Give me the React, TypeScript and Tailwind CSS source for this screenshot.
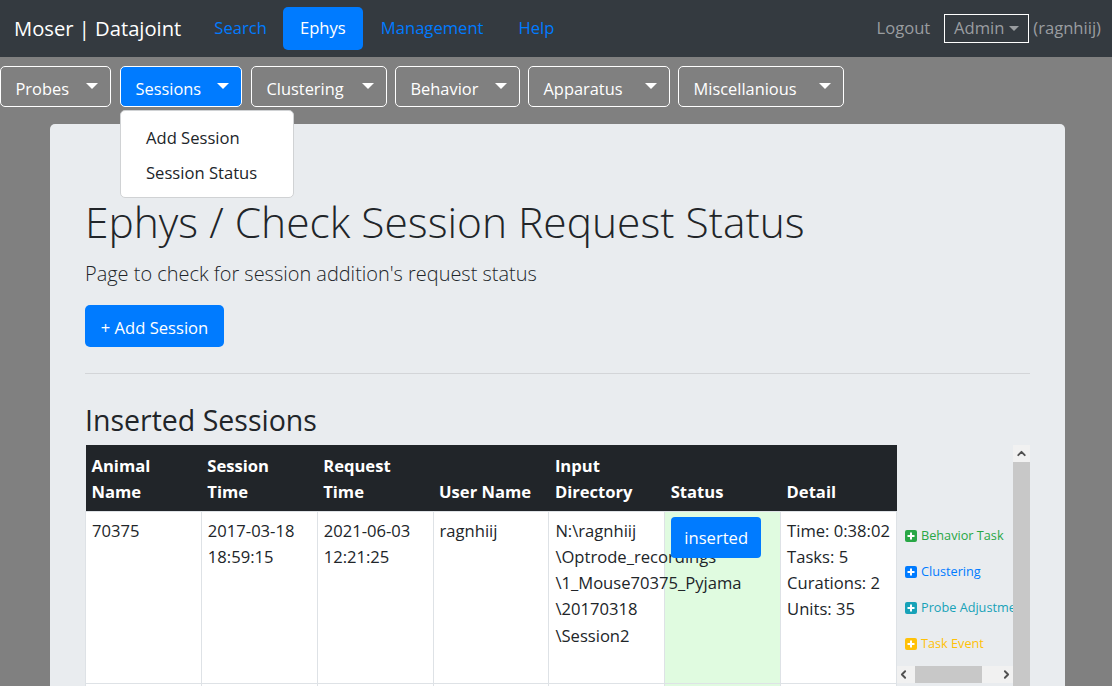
import { ChevronLeft, ChevronRight, ChevronUp } from 'lucide-react';

const subNav = [
  { label: 'Probes', width: 'w-[111px]' },
  { label: 'Sessions', width: 'ml-px w-[122px]', active: true },
  { label: 'Clustering', width: 'ml-px w-[136px]' },
  { label: 'Behavior', width: 'w-[125px]' },
  { label: 'Apparatus', width: 'w-[142px]' },
  { label: 'Miscellanious', width: 'w-[166px]' },
];

const headers = [['Animal', 'Name'], ['Session', 'Time'], ['Request', 'Time'], ['User Name'], ['Input', 'Directory'], ['Status'], ['Detail']];

const links = [
  { label: 'Behavior Task', text: 'text-[#28a745]', fill: '#28a745' },
  { label: 'Clustering', text: 'text-[#007bff]', fill: '#007bff' },
  { label: 'Probe Adjustment', text: 'text-[#17a2b8]', fill: '#17a2b8' },
  { label: 'Task Event', text: 'text-[#ffc107]', fill: '#ffc107' },
];

function PlusSquare({ fill }: { fill: string }) {
  return (
    <svg width="12" height="12" viewBox="0 0 12 12" className="shrink-0">
      <rect width="12" height="12" rx="2" fill={fill} />
      <path d="M6 2.5v7M2.5 6h7" stroke="#fff" strokeWidth="2" />
    </svg>
  );
}

export default function App() {
  return (
    <div className="h-[686px] overflow-hidden bg-[#808080] font-['Open_Sans','Noto_Sans',sans-serif] text-[16.6px] text-[#212529]">
      <nav className="flex h-[57px] items-center bg-[#343a40] pl-[14px] pr-[11px]">
        <span className="mr-[33px] text-[20.2px] text-white">Moser | Datajoint</span>
        <a className="text-[#007bff]">Search</a>
        <a className="ml-[16px] flex h-[43px] w-[80px] items-center justify-center rounded-[5px] bg-[#007bff] text-white">Ephys</a>
        <a className="ml-[18px] text-[#007bff]">Management</a>
        <a className="ml-[35px] text-[#007bff]">Help</a>
        <a className="ml-auto text-[#9a9da0]">Logout</a>
        <span className="ml-[14px] flex h-[29px] w-[85px] items-center justify-center gap-[5px] border border-white text-[#9a9da0]">
          Admin
          <span className="inline-block border-x-[5px] border-t-[5px] border-x-transparent border-t-[#9a9da0]" />
        </span>
        <span className="ml-[4px] text-[#9a9da0]">(ragnhiij)</span>
      </nav>

      <div className="relative flex h-[67px] items-start gap-[8px] pt-[9px]">
        {subNav.map((item) => (
          <button
            key={item.label}
            className={`flex h-[41px] items-start justify-between rounded-[5px] border border-white pl-[14.5px] pr-[12px] pt-[9px] text-[16.4px] text-white ${item.width} ${item.active ? 'bg-[#007bff]' : ''}`}
          >
            <span className="leading-[26px]">{item.label}</span>
            <span className="mt-[7px] inline-block border-x-[6px] border-t-[6px] border-x-transparent border-t-white" />
          </button>
        ))}
        <div className="absolute left-[119.5px] top-[53px] z-10 h-[88px] w-[174px] rounded-[5px] border border-[#d0d2d4] bg-white pl-[25.5px] pt-[9px] text-[16.6px] text-[#212529]">
          <div className="h-[35px] leading-[35px]">Add Session</div>
          <div className="h-[35px] leading-[35px]">Session Status</div>
        </div>
      </div>

      <main className="ml-[50px] mr-[47px] h-[600px] rounded-[5px] bg-[#e9ecef] px-[35px] pt-[69px]">
        <h1 className="text-[42.5px] font-[350] leading-[58px]">Ephys / Check Session Request Status</h1>
        <p className="mt-[7px] text-[19.95px] font-light leading-[32px]">Page to check for session addition's request status</p>
        <button className="mt-[15px] h-[42px] w-[139px] rounded-[5px] bg-[#007bff] pt-[4px] text-white">+ Add Session</button>
        <hr className="mt-[26px] border-[#d3d5d8]" />
        <h2 className="mt-[27px] h-[44px] text-[28.5px] leading-[38px]">Inserted Sessions</h2>

        <div className="flex items-start">
          <table className="w-[812px] shrink-0 table-fixed border-collapse">
            <thead>
              <tr className="h-[66px] bg-[#212529] text-white">
                {headers.map((lines) => (
                  <th key={lines[0]} className="px-[6px] pb-[6px] text-left align-bottom font-bold leading-[26px]">
                    {lines.map((line) => (
                      <div key={line}>{line}</div>
                    ))}
                  </th>
                ))}
              </tr>
            </thead>
            <tbody>
              <tr className="h-[172px] bg-white align-top leading-[26.25px]">
                <td className="border border-[#dee2e6] px-[6px] pt-[6px]">70375</td>
                <td className="border border-[#dee2e6] px-[6px] pt-[6px]">2017-03-18 18:59:15</td>
                <td className="border border-[#dee2e6] px-[6px] pt-[6px]">2021-06-03 12:21:25</td>
                <td className="border border-[#dee2e6] px-[6px] pt-[6px]">ragnhiij</td>
                <td className="border border-[#dee2e6] px-[6px] pt-[6px]">
                  <div className="whitespace-nowrap">N:\ragnhiij</div>
                  <div className="whitespace-nowrap">\Optrode_recordings</div>
                  <div className="whitespace-nowrap">\1_Mouse70375_Pyjama</div>
                  <div className="whitespace-nowrap">\20170318</div>
                  <div className="whitespace-nowrap">\Session2</div>
                </td>
                <td className="border border-[#dee2e6] bg-[#e0fbe0] px-[6px] pt-[5px]">
                  <button className="h-[41px] w-[90px] rounded-[4px] bg-[#007bff] pt-[3px] text-white">inserted</button>
                </td>
                <td className="border border-[#dee2e6] px-[6px] pt-[6px]">
                  <div className="whitespace-nowrap">Time: 0:38:02</div>
                  <div>Tasks: 5</div>
                  <div>Curations: 2</div>
                  <div>Units: 35</div>
                </td>
              </tr>
              <tr className="h-[40px] bg-white">
                {headers.map((lines, i) => (
                  <td key={lines[0]} className={`border border-[#dee2e6] ${i === 5 ? 'bg-[#e0fbe0]' : ''}`} />
                ))}
              </tr>
            </tbody>
          </table>

          <div className="w-[116px] shrink-0 self-stretch">
            <div className="h-[73px]" />
            <div className="h-[148px] overflow-hidden pl-[8px]">
              {links.map((link) => (
                <div key={link.label} className={`flex h-[36px] items-center gap-[4px] whitespace-nowrap text-[12.7px] ${link.text}`}>
                  <PlusSquare fill={link.fill} />
                  {link.label}
                </div>
              ))}
            </div>
            <div className="flex h-[17px] items-center justify-between bg-[#f1f1f1]">
              <ChevronLeft size={13} strokeWidth={3.5} className="text-[#505050]" />
              <div className="mr-[14px] h-full w-[67px] bg-[#c8c8c8]" />
              <ChevronRight size={13} strokeWidth={3.5} className="text-[#505050]" />
            </div>
          </div>

          <div className="h-[241px] w-[17px] shrink-0 bg-[#c8c8c8]">
            <div className="flex h-[17px] items-center justify-center bg-[#f1f1f1]">
              <ChevronUp size={13} strokeWidth={3.5} className="text-[#505050]" />
            </div>
          </div>
        </div>
      </main>
    </div>
  );
}
